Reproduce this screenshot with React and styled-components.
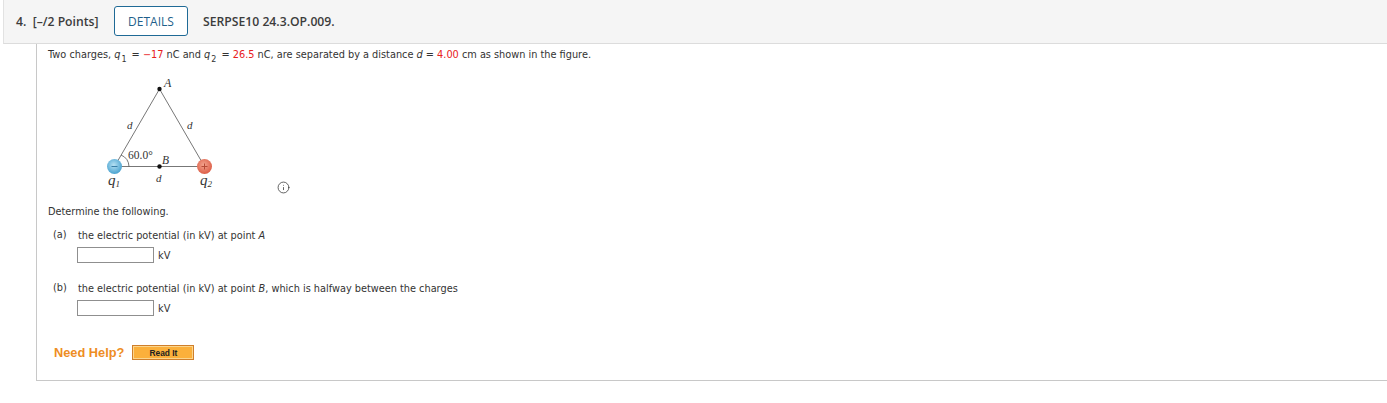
import styled, { createGlobalStyle } from "styled-components";
import { Info } from "lucide-react";

const Global = createGlobalStyle`
  html, body { margin: 0; padding: 0; background: #fff; }
  body { font-family: "DejaVu Sans", Verdana, sans-serif; font-size: 9.75px; color: #333; }
`;

const Page = styled.div`
  width: 1387px;
  height: 403px;
  box-sizing: border-box;
  padding-left: 3px;
  overflow: hidden;
`;

const Header = styled.header`
  height: 44px;
  box-sizing: border-box;
  display: flex;
  align-items: center;
  padding: 0 0 1px 12px;
  background: #f5f5f5;
  border-left: 1px solid #e2e2e2;
  border-bottom: 1px solid #dcdcdc;
  font-family: "Open Sans", sans-serif;
  font-size: 12.2px;
  color: #3c3c3c;
`;

const Points = styled.span`
  font-weight: 600;
  width: 98px;
  white-space: pre;
`;

const Details = styled.button`
  width: 74px;
  height: 30px;
  padding: 0;
  background: #fff;
  border: 1px solid #1f6a96;
  border-radius: 3px;
  font: 400 12px "Open Sans", sans-serif;
  color: #1f5f8b;
`;

const Code = styled.span`
  font-weight: 600;
  margin-left: 15px;
`;

const Body = styled.main`
  margin-left: 33px;
  height: 337px;
  box-sizing: border-box;
  padding: 4px 0 0 11px;
  border-left: 1px solid #c8c8c8;
  border-bottom: 1px solid #c8c8c8;
`;

const Line = styled.p`
  margin: 0;
  height: 14px;
  line-height: 14px;
  white-space: pre;
`;

const Value = styled.span`
  color: #e8201c;
`;

const Var = styled.i`
  font-style: italic;
`;

const Sub = styled.sub`
  font-size: 8px;
  line-height: 0;
  vertical-align: -4px;
  margin: 0 2px 0 1px;
`;

const FigureRow = styled.div`
  display: flex;
  align-items: flex-start;
  height: 128px;
  padding-top: 15px;
  margin-left: 56px;
`;

const InfoMark = styled.span`
  display: flex;
  margin: 104px 0 0 43px;
  color: #333;
`;

const Part = styled.section`
  display: grid;
  grid-template-columns: 25px 1fr;
  margin: ${p => p.$first ? "10px" : "19px"} 0 0 5px;
  row-gap: 4px;
`;

const AnswerRow = styled.div`
  grid-column: 2;
  display: flex;
  align-items: center;
  gap: 4px;
  margin-left: -1px;
`;

const Answer = styled.input`
  width: 77px;
  height: 16px;
  box-sizing: border-box;
  background: #fff;
  border: 1px solid #8f8f8f;
  padding: 0;
`;

const Help = styled.div`
  display: flex;
  align-items: center;
  gap: 8px;
  margin: 29px 0 0 6px;
`;

const HelpLabel = styled.span`
  font: 700 12.8px "Liberation Sans", sans-serif;
  color: #ee8d24;
`;

const ReadIt = styled.button`
  width: 62px;
  height: 15px;
  padding: 0;
  background: #fbb03b;
  border: 1px solid #cf7f2b;
  box-shadow: inset 0 0 0 1px #fcd58c;
  font: 700 8.4px "Liberation Sans", sans-serif;
  color: #222;
`;

function Figure() {
  return (
    <svg width="130" height="124" viewBox="0 -6 130 124">
      <defs>
        <radialGradient id="neg" cx="45%" cy="40%" r="60%">
          <stop offset="0%" stopColor="#b5e0f2" />
          <stop offset="100%" stopColor="#4aa3d0" />
        </radialGradient>
        <radialGradient id="pos" cx="45%" cy="40%" r="60%">
          <stop offset="0%" stopColor="#f3a48e" />
          <stop offset="100%" stopColor="#dd5f48" />
        </radialGradient>
      </defs>
      <path d="M10.5 83.5 L55.5 6 L100.5 83.5 Z" fill="none" stroke="#777" strokeWidth="1" />
      <path d="M17 72 A13 13 0 0 1 25 83.5" fill="none" stroke="#555" strokeWidth="0.8" />
      <circle cx="10.5" cy="83.5" r="7.5" fill="url(#neg)" />
      <circle cx="100.5" cy="83.5" r="7.5" fill="url(#pos)" />
      <path d="M7.5 83.5 H13.5" stroke="#3a7fa6" strokeWidth="1" />
      <path d="M97.5 83.5 H103.5 M100.5 80.5 V86.5" stroke="#b54a36" strokeWidth="1" />
      <circle cx="55.5" cy="6" r="2.2" fill="#111" />
      <circle cx="55.5" cy="83.5" r="2.2" fill="#111" />
      <g fontFamily="Liberation Serif, serif" fill="#333">
        <text x="60" y="4" fontSize="12" fontStyle="italic">A</text>
        <text x="58" y="81" fontSize="11.5" fontStyle="italic">B</text>
        <text x="23" y="46" fontSize="11" fontStyle="italic">d</text>
        <text x="83" y="46" fontSize="11" fontStyle="italic">d</text>
        <text x="52" y="99" fontSize="11" fontStyle="italic">d</text>
        <text x="24" y="76" fontSize="11.5">60.0°</text>
        <text x="4" y="102" fontSize="15" fontStyle="italic">q<tspan fontSize="9" dy="2">1</tspan></text>
        <text x="96" y="102" fontSize="15" fontStyle="italic">q<tspan fontSize="9" dy="2">2</tspan></text>
      </g>
    </svg>
  );
}

export default function App() {
  return (
    <Page>
      <Global />
      <Header>
        <Points>4.  [–/2 Points]</Points>
        <Details>DETAILS</Details>
        <Code>SERPSE10 24.3.OP.009.</Code>
      </Header>
      <Body>
        <Line>
          Two charges, <Var>q</Var><Sub>1</Sub> = <Value>−17</Value> nC and <Var>q</Var><Sub>2</Sub> = <Value>26.5</Value> nC, are separated by a distance <Var>d</Var> = <Value>4.00</Value> cm as shown in the figure.
        </Line>
        <FigureRow>
          <Figure />
          <InfoMark><Info size={13} strokeWidth={1.4} /></InfoMark>
        </FigureRow>
        <Line>Determine the following.</Line>
        <Part $first>
          <span>(a)</span>
          <Line>the electric potential (in kV) at point <Var>A</Var></Line>
          <AnswerRow><Answer /> kV</AnswerRow>
        </Part>
        <Part>
          <span>(b)</span>
          <Line>the electric potential (in kV) at point <Var>B</Var>, which is halfway between the charges</Line>
          <AnswerRow><Answer /> kV</AnswerRow>
        </Part>
        <Help>
          <HelpLabel>Need Help?</HelpLabel>
          <ReadIt>Read It</ReadIt>
        </Help>
      </Body>
    </Page>
  );
}
